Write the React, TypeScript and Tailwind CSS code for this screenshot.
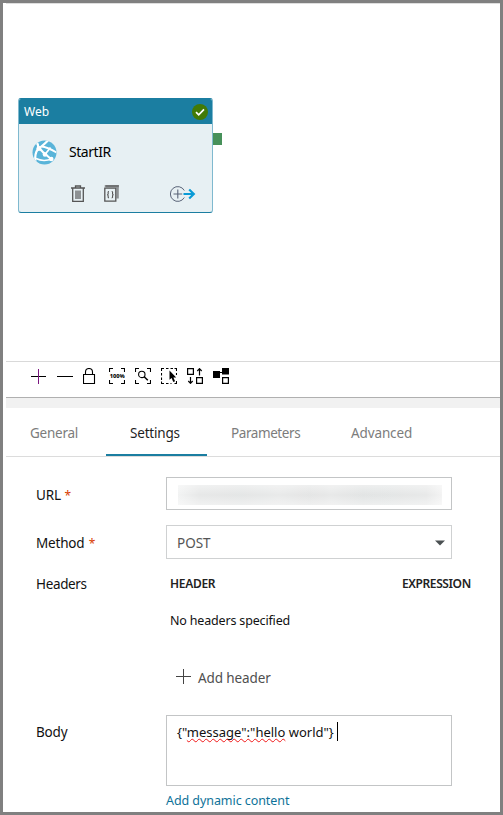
import type { ReactNode } from "react";

function ToolIcon({ children }: { children: ReactNode }) {
  return (
    <svg width="16" height="16" viewBox="0 0 16 16" fill="none" stroke="#000" className="shrink-0">
      {children}
    </svg>
  );
}

const corners = "M.5 4V.5H4M12 .5h3.5V4M15.5 12v3.5H12M4 15.5H.5V12";

function Toolbar() {
  return (
    <div className="flex gap-2.5 pt-1.5 pl-[25px]">
      <ToolIcon>
        <path d="M0 8.5h15" />
        <path d="M7.5 1v15" stroke="#7a1580" />
      </ToolIcon>
      <ToolIcon>
        <path d="M0 8.5h16" />
      </ToolIcon>
      <ToolIcon>
        <path d="M.5 6.5h11v9H.5z" strokeWidth="1.1" />
        <path d="M2.500 6.500V4a3.500 3.500 0 0 1 7 0v2.500" strokeWidth="1.1" />
      </ToolIcon>
      <ToolIcon>
        <path d={corners} strokeWidth="1.1" />
        <text x="0.8" y="10.2" fontSize="6" fontWeight="800" fill="#000" stroke="none" textLength="15" lengthAdjust="spacingAndGlyphs">
          100%
        </text>
      </ToolIcon>
      <ToolIcon>
        <path d={corners} strokeWidth="1.1" />
        <circle cx="6.800" cy="6.400" r="3.200" strokeWidth="1.100" />
        <path d="M9.200 8.800l3.600 3.400" strokeWidth="1.500" />
      </ToolIcon>
      <ToolIcon>
        <path d="M.5 3V.5H3M5 .5h2.500M9.500 .5H12M13.500 .5h2V3M.5 5v2.500M.5 9.500V12M.5 13.500v2H3M5 15.500h2.500M9.500 15.500h1M13.500 15.500h2V13M15.500 5v2" strokeWidth="1.1" />
        <path d="M8.500 2.600v9.200l2.100-1.800 1.700 4 1.800-.8-1.700-3.800h2.800z" fill="#000" stroke="none" />
      </ToolIcon>
      <ToolIcon>
        <path d="M.6 .6h5.800v5.800H.6zM9.600 9.600h5.800v5.800H9.600z" strokeWidth="1.2" />
        <path d="M12.500 7.500v-7M10.300 3l2.200-2.300L14.700 3M3.500 9v6.500M1.300 13l2.200 2.300L5.700 13" strokeWidth="1.2" />
      </ToolIcon>
      <ToolIcon>
        <path d="M0 3h7v7H0zM9 0h7v6.500H9z" fill="#000" stroke="none" />
        <path d="M7 4.500h2.500M9.600 9.600h5.800v5.800H9.600z" strokeWidth="1.2" />
      </ToolIcon>
    </div>
  );
}

function GlobeIcon() {
  return (
    <svg width="25" height="25" viewBox="0 0 25 25" className="shrink-0">
      <defs>
        <clipPath id="globe">
          <circle cx="12.500" cy="12.500" r="12" />
        </clipPath>
      </defs>
      <circle cx="12.500" cy="12.500" r="12" fill="#59b4d9" />
      <g clipPath="url(#globe)" stroke="#fff" fill="none">
        <path d="M4.500 2C6 4 6.500 6 6 9 3.500 12 2.500 16 3.500 23" strokeWidth="2.200" />
        <path d="M6.500 7L13 14.500M7 8.500L19.500 19.500" strokeWidth="2" />
        <path d="M6.500 8.500C10 6.500 14 2.500 16.500 0" strokeWidth="2.200" />
        <path d="M9.500 6.500c5 .3 10 3 15 6" strokeWidth="1.800" />
        <path d="M13 14.500l5.500-7" strokeWidth="1.800" />
        <path d="M4 18.500c5 2.500 10 2.500 16 .5" strokeWidth="1.500" />
      </g>
      <circle cx="6.800" cy="8.500" r="2.400" fill="#fff" />
      <circle cx="13" cy="14.500" r="2.300" fill="#fff" />
      <circle cx="19.300" cy="19" r="2.300" fill="#fff" />
    </svg>
  );
}

function ActivityCard() {
  return (
    <div className="flex items-start">
      <div className="h-[115px] w-[195px] overflow-hidden rounded-[3px] border border-[#7fb9cf] border-t-[#1b7ea1] border-b-[#1b7ea1] bg-[#e7f0f3]">
        <div className="flex h-[25px] items-center justify-between bg-[#1b7ea1] pr-1 pl-[5px]">
          <span className="pt-px text-[12px] leading-5 text-white">Web</span>
          <svg width="16" height="16" viewBox="0 0 16 16">
            <circle cx="8" cy="8" r="8" fill="#427a06" />
            <path d="M4 8.200l2.700 2.600L12 5.400" fill="none" stroke="#fff" strokeWidth="1.700" />
          </svg>
        </div>
        <div className="flex items-center gap-3 pt-4 pl-[13px]">
          <GlobeIcon />
          <span className="pb-px text-[14px] leading-5 tracking-[-0.45px] text-black">StartIR</span>
        </div>
        <div className="flex items-center pt-5 pl-[52px]">
          <svg width="14" height="18" viewBox="0 0 14 18" fill="none" stroke="#555">
            <path d="M0 3h14" strokeWidth="1.400" />
            <path d="M4.500 3V1h5v2M1.700 3v13.400h10.600V3" strokeWidth="1.300" />
            <path d="M4 5.500h6v8.500H4z" fill="#8d9193" stroke="none" />
          </svg>
          <svg width="16" height="18" viewBox="0 0 16 18" fill="none" stroke="#555" className="ml-[19px]">
            <path d="M1.500 1.200H15M13.600 1.500v12" stroke="#8d9193" strokeWidth="2.400" />
            <path d="M.7 1h14" strokeWidth="1" />
            <path d="M.8 3.200h11v13H.8z" fill="#e7f0f3" strokeWidth="1.300" />
            <path d="M5 6.500c-1.300 0-.8 1.200-.8 2 0 .8-.4 1.200-1.100 1.200.7 0 1.100.4 1.100 1.200 0 .8-.5 2 .8 2M7.700 6.500c1.300 0 .8 1.200.8 2 0 .8.4 1.200 1.100 1.200-.7 0-1.100.4-1.100 1.200 0 .8.500 2-.8 2" strokeWidth="1.100" />
          </svg>
          <svg width="26" height="18" viewBox="0 0 26 18" fill="none" className="ml-[50px]">
            <path d="M14.300 5.500a7.400 7.400 0 1 0 0 7" stroke="#5a6478" />
            <path d="M7.800 4.500v9M3.500 9h8.700" stroke="#5a6478" strokeWidth="1.100" />
            <path d="M13.500 9H24M19.200 4.500L23.800 9l-4.600 4.500" stroke="#0a9bd6" strokeWidth="2.200" />
          </svg>
        </div>
      </div>
      <div className="mt-[35px] h-3 w-[9px] bg-[#47915a]" />
    </div>
  );
}

function Tabs() {
  return (
    <div className="flex h-[49px] shrink-0 border-b border-[#dcdcdc] text-[13.5px] leading-5 text-[#7c7c7c]">
      <span className="w-[100px] pt-[15px] pl-6 tracking-[-0.25px]">General</span>
      <span className="w-[101px] border-b-2 border-[#1b7ea1] pt-[15px] pl-6 tracking-[-0.2px] text-[#1f1f1f]">Settings</span>
      <span className="w-[120px] pt-[15px] pl-6 tracking-[-0.42px]">Parameters</span>
      <span className="pt-[15px] pl-6 tracking-[-0.12px]">Advanced</span>
    </div>
  );
}

const blurStops =
  "bg-[linear-gradient(90deg,#f2f3f3,#e7e8e8_8%,#e4e6e6_24%,#e9eaea_38%,#e4e5e5_50%,#e8e9e9_58%,#e2e4e4_70%,#e4e6e6_82%,#e8e9e9_94%,#f3f3f3)]";

function Form() {
  return (
    <div className="flex flex-col pl-[30px] text-[13.5px] leading-5 text-[#111]">
      <div className="mt-5 flex h-[33px]">
        <div className="w-[130px] pt-2 tracking-[-0.1px]">
          URL <span className="text-[12px] text-[#d83b01]">*</span>
        </div>
        <div className="w-[286px] border border-[#c3c5c6] px-[11px] pt-[7px]">
          <div className={"h-5 w-[264px] " + blurStops}>
            <div className="h-full bg-linear-to-b from-white/40 via-transparent to-white/40" />
          </div>
        </div>
      </div>
      <div className="mt-[15px] flex h-[34px]">
        <div className="w-[130px] pt-2 tracking-[-0.2px]">
          Method <span className="pl-px text-[12px] text-[#d83b01]">*</span>
        </div>
        <div className="flex w-[286px] items-center justify-between border border-[#cfd1d2] pr-[6px] pl-[10px] text-[#555]">
          <span className="pt-0.5">POST</span>
          <svg width="10" height="6" viewBox="0 0 10 6" className="mt-px">
            <path d="M0 .5h10L5 5.500z" fill="#4a5052" />
          </svg>
        </div>
      </div>
      <div className="mt-[15px] flex h-5">
        <div className="w-[134px] tracking-[-0.35px]">Headers</div>
        <div className="w-[232px] text-[12px] font-semibold tracking-[-0.3px] text-[#222]">HEADER</div>
        <div className="text-[12px] font-semibold tracking-[-0.4px] text-[#222]">EXPRESSION</div>
      </div>
      <div className="mt-[17px] h-5 pl-[134px] text-[12.5px] tracking-[-0.17px]">No headers specified</div>
      <div className="mt-[37px] flex h-5 gap-[7px] pl-[140px] text-[#4f4f4f]">
        <svg width="15" height="15" viewBox="0 0 15 15" stroke="#444" className="mt-px">
          <path d="M0 7.500h15M7.500 0v15" />
        </svg>
        <span className="tracking-[-0.1px]">Add header</span>
      </div>
      <div className="mt-[27px] flex h-[71px]">
        <div className="w-[130px] pt-[7px] tracking-[-0.2px]">Body</div>
        <div className="flex w-[286px] border border-[#c3c5c6] pt-[6px] pl-[10px] text-[13px]">
          <span className="whitespace-pre">
            {'{"'}
            <span className="underline decoration-[#f01818] decoration-wavy decoration-1 underline-offset-1 [text-decoration-skip-ink:none]">
              {'message":"hello'}
            </span>
            {' world"}'}
          </span>
          <span className="ml-[3px] h-[19px] w-px bg-black" />
        </div>
      </div>
      <div className="mt-[5px] h-5 pl-[130px] text-[12.5px] tracking-[-0.07px] text-[#0e7299]">Add dynamic content</div>
    </div>
  );
}

export default function App() {
  return (
    <div className="flex h-[815px] w-[503px] flex-col overflow-hidden border-[3px] border-[#808080] bg-white pl-[3px] font-['Noto_Sans',sans-serif]">
      <div className="h-[358px] shrink-0 border-t border-[#dedede] pt-[94px] pl-3">
        <ActivityCard />
      </div>
      <div className="h-[37px] shrink-0 border-y border-t-[#d9d9d9] border-b-[#b0b0b0]">
        <Toolbar />
      </div>
      <div className="h-[10px] shrink-0 bg-[#f1f1f1]" />
      <Tabs />
      <Form />
    </div>
  );
}
